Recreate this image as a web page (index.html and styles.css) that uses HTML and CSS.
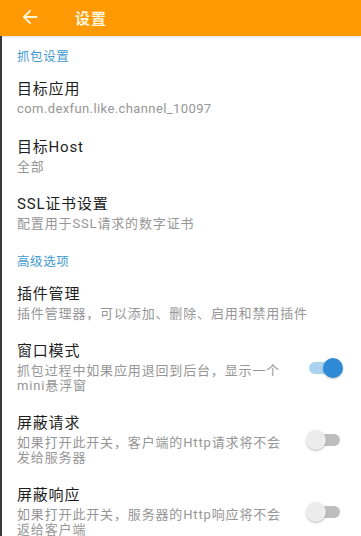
FILE: index.html
```html
<!DOCTYPE html>
<html lang="zh-CN">
<head>
<meta charset="utf-8">
<title>设置</title>
<link rel="stylesheet" href="styles.css">
</head>
<body>
<div class="app">
  <header class="toolbar">
    <svg class="back" viewBox="0 0 24 24" width="22" height="22"><path d="M20 11H7.83l5.59-5.59L12 4l-8 8 8 8 1.41-1.41L7.83 13H20v-2z" fill="#fff6dc"/></svg>
    <span class="toolbar-title">设置</span>
  </header>
  <main class="list">
    <div class="section">抓包设置</div>
    <div class="item">
      <div class="text">
        <div class="title">目标应用</div>
        <div class="desc latin">com.dexfun.like.channel_10097</div>
      </div>
    </div>
    <div class="item">
      <div class="text">
        <div class="title">目标Host</div>
        <div class="desc">全部</div>
      </div>
    </div>
    <div class="item">
      <div class="text">
        <div class="title">SSL证书设置</div>
        <div class="desc">配置用于SSL请求的数字证书</div>
      </div>
    </div>
    <div class="section">高级选项</div>
    <div class="item">
      <div class="text">
        <div class="title">插件管理</div>
        <div class="desc">插件管理器，可以添加、删除、启用和禁用插件</div>
      </div>
    </div>
    <div class="item">
      <div class="text narrow">
        <div class="title">窗口模式</div>
        <div class="desc">抓包过程中如果应用退回到后台，显示一个mini悬浮窗</div>
      </div>
      <div class="switch on"><span class="track"></span><span class="thumb"></span></div>
    </div>
    <div class="item">
      <div class="text narrow">
        <div class="title">屏蔽请求</div>
        <div class="desc">如果打开此开关，客户端的Http请求将不会发给服务器</div>
      </div>
      <div class="switch"><span class="track"></span><span class="thumb"></span></div>
    </div>
    <div class="item">
      <div class="text narrow">
        <div class="title">屏蔽响应</div>
        <div class="desc">如果打开此开关，服务器的Http响应将不会返给客户端</div>
      </div>
      <div class="switch"><span class="track"></span><span class="thumb"></span></div>
    </div>
  </main>
</div>
</body>
</html>
```
FILE: styles.css
```css
html, body {
  margin: 0;
  padding: 0;
  background: #ffffff;
}
body {
  font-family: Roboto, "Noto Sans CJK SC", sans-serif;
  width: 361px;
  height: 536px;
  overflow: hidden;
}
.app {
  display: flex;
  flex-direction: column;
}
.toolbar {
  height: 36px;
  background: #ff9a05;
  display: flex;
  align-items: center;
  padding-left: 19px;
  box-shadow: 0 1px 2px rgba(0,0,0,0.15);
}
.back {
  display: block;
  margin-top: -2px;
}
.toolbar-title {
  margin-left: 34px;
  margin-top: -2px;
  color: #fff6dc;
  font-size: 15px;
  font-weight: bold;
  letter-spacing: 1px;
}
.list {
  display: flex;
  flex-direction: column;
  border-left: 2px solid #3a3a3a;
  padding-left: 15px;
  padding-right: 18px;
}
.section {
  color: #3f9bcf;
  font-size: 12.5px;
  letter-spacing: 0.6px;
  line-height: 16px;
  padding: 13px 0 3px;
}
.item {
  display: flex;
  align-items: center;
  padding: 11px 0 9px;
}
.text {
  flex: 1;
  min-width: 0;
}
.text.narrow {
  flex: 0 0 275px;
}
.title {
  color: #1e1e1e;
  font-size: 15px;
  letter-spacing: 0.8px;
  line-height: 20px;
}
.desc {
  color: #969696;
  font-size: 13px;
  letter-spacing: 0.85px;
  line-height: 14.5px;
  margin-top: 3px;
}
.desc.latin {
  letter-spacing: 0.4px;
}
.switch {
  position: relative;
  width: 37px;
  height: 20px;
  margin-left: auto;
  margin-top: 2px;
}
.switch .track {
  position: absolute;
  left: 3px;
  top: 4px;
  width: 31px;
  height: 12px;
  border-radius: 6px;
  background: #bdbdbd;
}
.switch .thumb {
  position: absolute;
  left: 0;
  top: 0;
  width: 20px;
  height: 20px;
  border-radius: 50%;
  background: #ececec;
  box-shadow: 0 1px 2px rgba(0,0,0,0.25);
}
.switch.on .track {
  background: #a9d3f1;
}
.switch.on .thumb {
  left: auto;
  right: 0;
  background: #2e8ad6;
}
```
